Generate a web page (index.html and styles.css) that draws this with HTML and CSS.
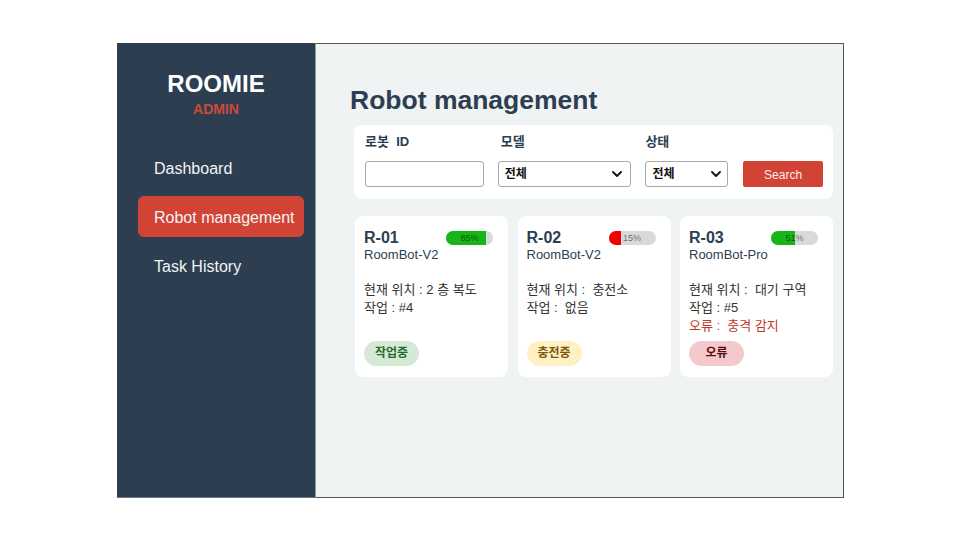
FILE: index.html
```html
<!DOCTYPE html>
<html lang="ko">
<head>
<meta charset="utf-8">
<title>ROOMIE Admin</title>
<link rel="stylesheet" href="styles.css">
</head>
<body>
<div class="frame">
  <aside class="sidebar">
    <div class="brand">ROOMIE</div>
    <div class="brand-sub">ADMIN</div>
    <nav class="nav">
      <a class="nav-item">Dashboard</a>
      <a class="nav-item active">Robot management</a>
      <a class="nav-item">Task History</a>
    </nav>
  </aside>
  <main class="main">
    <h1 class="title">Robot management</h1>
    <section class="filter">
      <div class="field f-id">
        <label class="label">로봇&nbsp; ID</label>
        <input class="input" type="text">
      </div>
      <div class="field f-model">
        <label class="label label-shift">모델</label>
        <div class="select-wrap">
          <select class="select"><option>전체</option></select>
          <svg class="chev" width="10" height="6" viewBox="0 0 10 6"><path d="M1 1 L5 5 L9 1" fill="none" stroke="#111" stroke-width="1.8" stroke-linecap="round" stroke-linejoin="round"/></svg>
        </div>
      </div>
      <div class="field f-state">
        <label class="label">상태</label>
        <div class="select-wrap">
          <select class="select"><option>전체</option></select>
          <svg class="chev chev-s" width="10" height="6" viewBox="0 0 10 6"><path d="M1 1 L5 5 L9 1" fill="none" stroke="#111" stroke-width="1.8" stroke-linecap="round" stroke-linejoin="round"/></svg>
        </div>
      </div>
      <button class="btn">Search</button>
    </section>
    <section class="cards">
      <article class="card">
        <div class="card-head">
          <span class="rid">R-01</span>
          <div class="battery"><div class="fill fill-ok" style="width:85%"></div><span class="pct">85%</span></div>
        </div>
        <div class="model">RoomBot-V2</div>
        <div class="info">
          <div>현재 위치 : 2 층 복도</div>
          <div>작업 : #4</div>
        </div>
        <span class="badge badge-work">작업중</span>
      </article>
      <article class="card">
        <div class="card-head">
          <span class="rid">R-02</span>
          <div class="battery"><div class="fill fill-low" style="width:15%"></div><span class="pct">15%</span></div>
        </div>
        <div class="model">RoomBot-V2</div>
        <div class="info">
          <div>현재 위치 :&nbsp; 충전소</div>
          <div>작업 :&nbsp; 없음</div>
        </div>
        <span class="badge badge-charge">충전중</span>
      </article>
      <article class="card">
        <div class="card-head">
          <span class="rid">R-03</span>
          <div class="battery"><div class="fill fill-ok" style="width:51%"></div><span class="pct">51%</span></div>
        </div>
        <div class="model">RoomBot-Pro</div>
        <div class="info">
          <div>현재 위치 :&nbsp; 대기 구역</div>
          <div>작업 : #5</div>
          <div class="err">오류 :&nbsp; 충격 감지</div>
        </div>
        <span class="badge badge-error">오류</span>
      </article>
    </section>
  </main>
</div>
</body>
</html>
```

FILE: styles.css
```css
html, body {
  margin: 0;
  padding: 0;
  background: #ffffff;
}
body {
  font-family: "Liberation Sans", "Noto Sans CJK KR", Arial, sans-serif;
  color: #2c3e50;
}
.frame {
  margin: 43px 0 0 117px;
  width: 727px;
  height: 455px;
  display: flex;
}
.sidebar {
  width: 199px;
  flex: none;
  box-sizing: border-box;
  background: #2c3e50;
  border-right: 1px solid #8d9aa7;
  border-bottom: 1px solid #6a7888;
  padding-top: 27px;
  display: flex;
  flex-direction: column;
}
.brand {
  text-align: center;
  color: #ffffff;
  font-weight: bold;
  font-size: 24px;
  line-height: 28px;
}
.brand-sub {
  text-align: center;
  color: #d0483a;
  font-weight: bold;
  font-size: 14px;
  line-height: 16px;
  margin-top: 3px;
}
.nav {
  margin-top: 30px;
  margin-left: 21px;
  width: 166px;
  display: flex;
  flex-direction: column;
  gap: 8px;
}
.nav-item {
  display: block;
  height: 41px;
  box-sizing: border-box;
  padding: 13px 0 0 16px;
  font-size: 16px;
  line-height: 18px;
  color: #f2f4f6;
  border-radius: 6px;
  white-space: nowrap;
}
.nav-item.active {
  background: #d14334;
}
.main {
  flex: 1;
  box-sizing: border-box;
  background: #f0f3f4;
  border: 1px solid #555555;
  border-left: none;
  padding: 41px 0 0 38px;
}
.title {
  margin: 0 0 0 -4px;
  font-size: 26.5px;
  line-height: 31px;
  font-weight: bold;
  color: #2c3e50;
}
.filter {
  margin-top: 9px;
  width: 479px;
  box-sizing: border-box;
  background: #ffffff;
  border-radius: 8px;
  padding: 9px 10px 12px 11px;
  display: flex;
  align-items: flex-end;
}
.field {
  display: flex;
  flex-direction: column;
  gap: 11px;
}
.f-id { width: 119px; }
.f-model { width: 134px; margin-left: 14px; }
.f-state { width: 83px; margin-left: 14px; }
.label {
  font-size: 13px;
  line-height: 16px;
  font-weight: bold;
  color: #2c3e50;
}
.label-shift { padding-left: 3px; }
.input {
  width: 100%;
  height: 26px;
  box-sizing: border-box;
  border: 1px solid #a9a9a9;
  border-radius: 3px;
  margin: 0;
  padding: 0 6px;
  background: #fff;
}
.select-wrap {
  position: relative;
  height: 26px;
}
.select {
  -webkit-appearance: none;
  appearance: none;
  width: 100%;
  height: 26px;
  box-sizing: border-box;
  border: 1px solid #a9a9a9;
  border-radius: 3px;
  margin: 0;
  padding: 0 0 0 6px;
  background: #fff;
  font-family: "Liberation Sans", "Noto Sans CJK KR", sans-serif;
  font-size: 12px;
  font-weight: bold;
  color: #111;
}
.chev {
  position: absolute;
  right: 9px;
  top: 10px;
}
.chev-s { right: 7px; }
.btn {
  margin-left: 15px;
  width: 80px;
  height: 26px;
  border: none;
  border-radius: 2px;
  background: #d14334;
  color: #fbecea;
  font-family: "Liberation Sans", Arial, sans-serif;
  font-size: 12px;
  padding: 1px 0 0;
}
.cards {
  margin-top: 17px;
  margin-left: 1px;
  width: 478px;
  display: grid;
  grid-template-columns: repeat(3, 1fr);
  column-gap: 9.5px;
}
.card {
  background: #ffffff;
  border-radius: 8px;
  padding: 13px 9px 11px 9px;
  display: flex;
  flex-direction: column;
  align-items: flex-start;
}
.card-head {
  align-self: stretch;
  display: flex;
  justify-content: space-between;
  align-items: center;
  height: 18px;
  padding-right: 6px;
}
.rid {
  font-size: 16px;
  line-height: 18px;
  font-weight: bold;
  color: #2c3e50;
}
.battery {
  position: relative;
  width: 47px;
  height: 14px;
  margin-top: 0;
  border-radius: 7px;
  background: #d9d9d9;
  overflow: hidden;
}
.fill {
  height: 100%;
}
.fill-ok { background: #17b517; }
.fill-low { background: #f20000; min-width: 12px; }
.pct {
  position: absolute;
  left: 0;
  right: 0;
  top: 0;
  text-align: center;
  font-size: 9px;
  line-height: 14px;
  color: rgba(0, 0, 0, 0.55);
}
.model {
  font-size: 13px;
  line-height: 16px;
  color: #2c3e50;
}
.info {
  margin-top: 18px;
  font-size: 13px;
  line-height: 18px;
  color: #333333;
}
.err { color: #c0392b; }
.badge {
  margin-top: auto;
  width: 55px;
  height: 25px;
  border-radius: 13px;
  text-align: center;
  font-size: 12px;
  line-height: 25px;
  font-weight: bold;
}
.card:last-child .badge { margin-top: 6px; }
.badge-work { background: #d4ead5; color: #2a6b2d; }
.badge-charge { background: #fff0c4; color: #7a5a05; }
.badge-error { background: #f4c9cb; color: #5c0d12; }
```
